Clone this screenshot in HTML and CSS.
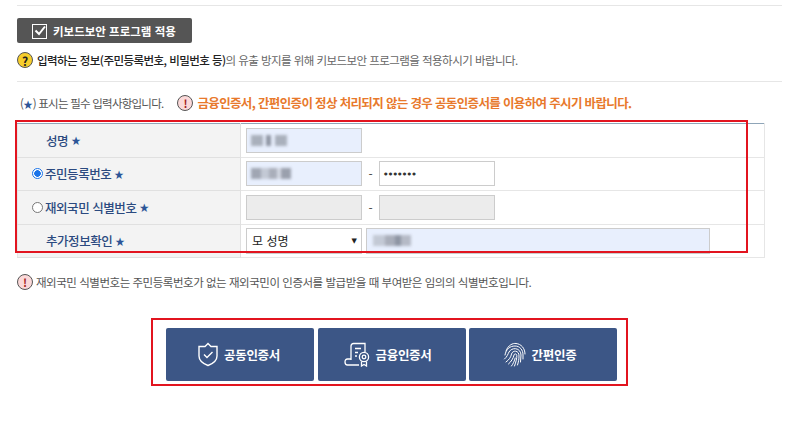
FILE: index.html
```html
<!DOCTYPE html>
<html lang="ko">
<head>
    <meta charset="UTF-8">
    <title>키보드보안 프로그램 적용</title>
    <link rel="stylesheet" href="styles.css">
</head>
<body>
    <div class="page">
        <div class="section-top">
            <button class="keyboard-btn">
                <svg class="check-icon" width="16" height="16" viewBox="0 0 16 16">
                    <rect x="0.5" y="1.5" width="14" height="14" fill="none" stroke="#fff" stroke-width="1"/>
                    <path d="M3.5 7.5 L7 11 L13 3.5" fill="none" stroke="#fff" stroke-width="2"/>
                </svg>
                키보드보안 프로그램 적용
            </button>
            <p class="help-line">
                <span class="icon-help">?</span>
                <span><b>입력하는 정보(주민등록번호, 비밀번호 등)</b>의 유출 방지를 위해 키보드보안 프로그램을 적용하시기 바랍니다.</span>
            </p>
        </div>

        <div class="notice-line">
            <span class="required-note">(<i class="star">★</i>) 표시는 필수 입력사항입니다.</span>
            <span class="icon-alert icon-alert-big">!</span>
            <strong class="orange-note">금융인증서, 간편인증이 정상 처리되지 않는 경우 공동인증서를 이용하여 주시기 바랍니다.</strong>
        </div>

        <table class="form-table">
            <tr>
                <th><span class="label label-plain">성명 <i class="star">★</i></span></th>
                <td>
                    <div class="field-row">
                        <div class="field field-filled"><span class="blur blur-name"></span></div>
                    </div>
                </td>
            </tr>
            <tr>
                <th>
                    <span class="label"><span class="radio radio-on"></span>주민등록번호 <i class="star">★</i></span>
                </th>
                <td>
                    <div class="field-row">
                        <div class="field field-filled"><span class="blur blur-id"></span></div>
                        <span class="dash">-</span>
                        <div class="field field-pw">●●●●●●●</div>
                    </div>
                </td>
            </tr>
            <tr>
                <th>
                    <span class="label"><span class="radio"></span>재외국민 식별번호 <i class="star">★</i></span>
                </th>
                <td>
                    <div class="field-row">
                        <div class="field field-off"></div>
                        <span class="dash">-</span>
                        <div class="field field-off"></div>
                    </div>
                </td>
            </tr>
            <tr>
                <th><span class="label label-plain">추가정보확인 <i class="star">★</i></span></th>
                <td>
                    <div class="field-row">
                        <div class="field field-select">모 성명<span class="arrow">▼</span></div>
                        <div class="field field-filled field-wide"><span class="blur blur-extra"></span></div>
                    </div>
                </td>
            </tr>
        </table>

        <p class="foot-note">
            <span class="icon-alert">!</span>
            재외국민 식별번호는 주민등록번호가 없는 재외국민이 인증서를 발급받을 때 부여받은 임의의 식별번호입니다.
        </p>

        <div class="auth-buttons">
            <button class="auth-btn">
                <svg width="22" height="25" viewBox="0 0 22 25" fill="none" stroke="#fff" stroke-width="1.4">
                    <path d="M11 1.5 L14 4.5 L20 4.5 L20 14 C20 19 15 22 11 23.5 C7 22 2 19 2 14 L2 4.5 L8 4.5 Z"/>
                    <path d="M7 12.5 L10 15.5 L15.5 10"/>
                </svg>
                공동인증서
            </button>
            <button class="auth-btn">
                <svg width="26" height="25" viewBox="0 0 26 25" fill="none" stroke="#fff" stroke-width="1.3">
                    <path d="M7 18 L7 4 C7 2.5 8 1.5 9.5 1.5 L21 1.5 L21 10"/>
                    <path d="M7 17 L3.5 17 C2 17 1 18 1 20 C1 22 2 23 3.5 23 L15 23"/>
                    <path d="M11 6.5 L17 6.5 M11 10.5 L14 10.5 M11 14 L13 14"/>
                    <circle cx="20" cy="15" r="4.6"/>
                    <circle cx="20" cy="15" r="1.8"/>
                    <path d="M17.5 19.5 L17.5 24 L20 22.5 L22.5 24 L22.5 19.5"/>
                </svg>
                금융인증서
            </button>
            <button class="auth-btn">
                <svg width="24" height="25" viewBox="0 0 24 25" fill="none" stroke="#fff" stroke-width="1" stroke-linecap="round">
                    <path d="M3 9 C5 3 10 1 13 1.5 C18 2 22 6 22 12"/>
                    <path d="M2 13 C3 7 7 4 12 4 C17 4 20 8 20 13 L20 17"/>
                    <path d="M1.5 17 C4 15 5 12 6 10 C7.5 7.5 10 6.5 12.5 6.7 C16 7 18 10 18 13 L17.5 20"/>
                    <path d="M3 20 C6 18 8 15 8.5 12 C9 10 11 9 12.5 9.2 C15 9.5 16 11.5 16 14 C16 17 15.5 20 14.5 23"/>
                    <path d="M5.5 22 C8 20 10.5 16 11 13 C11.2 11.5 13.7 11.5 13.8 13.5 C14 16 13 20 11.5 24"/>
                    <path d="M8.5 24 C10 22 11.5 19 12.2 16"/>
                </svg>
                간편인증
            </button>
        </div>
    </div>

    <div class="red-box red-box-form"></div>
    <div class="red-box red-box-buttons"></div>
</body>
</html>
```

FILE: styles.css
```css
* {
    box-sizing: border-box;
}

body {
    margin: 0;
    padding: 0;
    background: #fff;
    font-family: "Noto Sans CJK KR", "Noto Sans", sans-serif;
    overflow: hidden;
}

.page {
    width: 765px;
    margin-left: 17px;
    padding-top: 5px;
}

.section-top {
    height: 77px;
    padding-top: 12px;
    border-top: 1px solid #e6e6e6;
    border-bottom: 1px solid #e6e6e6;
}

.keyboard-btn {
    display: flex;
    align-items: center;
    gap: 5px;
    width: 175px;
    height: 25px;
    padding: 0 0 0 15px;
    border: none;
    border-radius: 2px;
    background: #555;
    color: #fff;
    font-family: inherit;
    font-size: 11.5px;
    font-weight: 700;
    letter-spacing: 0;
}

.help-line {
    display: flex;
    align-items: center;
    gap: 4px;
    margin: 9px 0 0;
    font-size: 11.5px;
    letter-spacing: -0.55px;
    color: #666;
}

.help-line b {
    color: #222;
    font-weight: 500;
}

.icon-help {
    display: inline-flex;
    justify-content: center;
    align-items: center;
    width: 16px;
    height: 16px;
    border: 1px solid #555;
    border-radius: 50%;
    background: #f7ce2c;
    color: #222;
    font-size: 12px;
    font-weight: 700;
    letter-spacing: 0;
}

.notice-line {
    display: flex;
    align-items: center;
    height: 41px;
    padding: 0 0 0 3px;
}

.required-note {
    font-size: 11.5px;
    letter-spacing: -0.76px;
    color: #555;
}

.star {
    font-style: normal;
    color: #2b5597;
    font-size: 9.5px;
    letter-spacing: 0;
}

.icon-alert {
    display: inline-flex;
    flex-shrink: 0;
    justify-content: center;
    align-items: center;
    width: 16px;
    height: 16px;
    border: 1.5px solid #555;
    border-radius: 50%;
    background: #fbd9d9;
    color: #a02020;
    font-size: 11px;
    font-weight: 700;
    letter-spacing: 0;
}

.icon-alert-big {
    margin: 0 4px 0 14px;
}

.orange-note {
    font-size: 12.5px;
    font-weight: 700;
    letter-spacing: -0.65px;
    color: #e8792c;
}

.form-table {
    width: 748px;
    table-layout: fixed;
    border-collapse: collapse;
    border: 1px solid #e6e6e6;
    border-top: 1px solid #8fa5b8;
}

.form-table tr {
    height: 33.5px;
}

.form-table th {
    width: 223px;
    padding: 0;
    background: #f3f3f3;
    border-right: 1px solid #e0e0e0;
    border-bottom: 1px solid #e0e0e0;
    text-align: left;
    font-weight: 500;
}

.form-table td {
    padding: 0 0 0 5px;
    border-bottom: 1px solid #e6e6e6;
}

.label {
    display: flex;
    align-items: center;
    padding-left: 14px;
    font-size: 12.5px;
    letter-spacing: -0.45px;
    color: #2b4a80;
    white-space: pre;
}

.label-plain {
    padding-left: 28px;
}

.radio {
    width: 11px;
    height: 11px;
    margin-right: 2px;
    border: 1px solid #777;
    border-radius: 50%;
    background: #fff;
}

.radio-on {
    border-color: #1a73e8;
    background: radial-gradient(circle, #1a73e8 0, #1a73e8 3px, #fff 3.6px);
}

.field-row {
    display: flex;
    align-items: center;
}

.field {
    flex-shrink: 0;
    width: 116px;
    height: 25px;
    border: 1px solid #ccc;
}

.field-filled {
    display: flex;
    align-items: center;
    padding-left: 4px;
    background: #e8effd;
}

.field-wide {
    width: 344px;
    margin-left: 4px;
    height: 26px;
}

.field-off {
    background: #ececec;
}

.field-pw {
    display: flex;
    align-items: center;
    padding-left: 4px;
    font-family: "DejaVu Sans", sans-serif;
    font-size: 4px;
    letter-spacing: 1.2px;
    color: #333;
}

.field-select {
    display: flex;
    align-items: center;
    justify-content: space-between;
    padding: 0 4px 0 5px;
    height: 26px;
    background: #fff;
    font-size: 12px;
    color: #222;
}

.arrow {
    font-family: "DejaVu Sans", sans-serif;
    font-size: 7px;
}

.dash {
    width: 17px;
    text-align: center;
    font-size: 12px;
    color: #444;
}

.blur {
    display: block;
    height: 11px;
    filter: blur(1.6px);
}

.blur-name {
    width: 36px;
    background: linear-gradient(to right, #a9b0bc 0 12px, #e8effd 12px 15px, #8e95a3 15px 20px, #e8effd 20px 24px, #a9b0bc 24px);
}

.blur-id {
    width: 40px;
    background: linear-gradient(to right, #a0a6b3 0 10px, #c3c9d5 10px 18px, #a9aeba 18px 26px, #d4d9e4 26px 30px, #9aa0ad 30px);
}

.blur-extra {
    width: 38px;
    margin-left: 2px;
    background: linear-gradient(to right, #c3c9d5 0 12px, #a9aeba 12px 22px, #8e95a3 22px 28px, #b5bac6 28px);
}

.foot-note {
    display: flex;
    align-items: center;
    gap: 3px;
    height: 16px;
    margin: 16px 0 0;
    font-size: 11.5px;
    letter-spacing: -0.47px;
    color: #555;
}

.auth-buttons {
    display: flex;
    justify-content: flex-start;
    gap: 3.5px;
    margin: 38px 0 0 149px;
}

.auth-btn {
    display: flex;
    justify-content: center;
    align-items: center;
    gap: 5px;
    width: 148px;
    height: 53px;
    padding: 0 3px 0 0;
    border: none;
    border-radius: 2px;
    background: #3c5686;
    color: #fff;
    font-family: inherit;
    font-size: 12.5px;
    font-weight: 700;
    letter-spacing: -0.3px;
}

.auth-btn + .auth-btn {
    padding-right: 7px;
}

.red-box {
    position: absolute;
    border: 2px solid #e2141f;
    pointer-events: none;
}

.red-box-form {
    left: 15px;
    top: 120px;
    width: 733px;
    height: 133px;
}

.red-box-buttons {
    left: 151px;
    top: 318px;
    width: 477px;
    height: 68px;
}
```
